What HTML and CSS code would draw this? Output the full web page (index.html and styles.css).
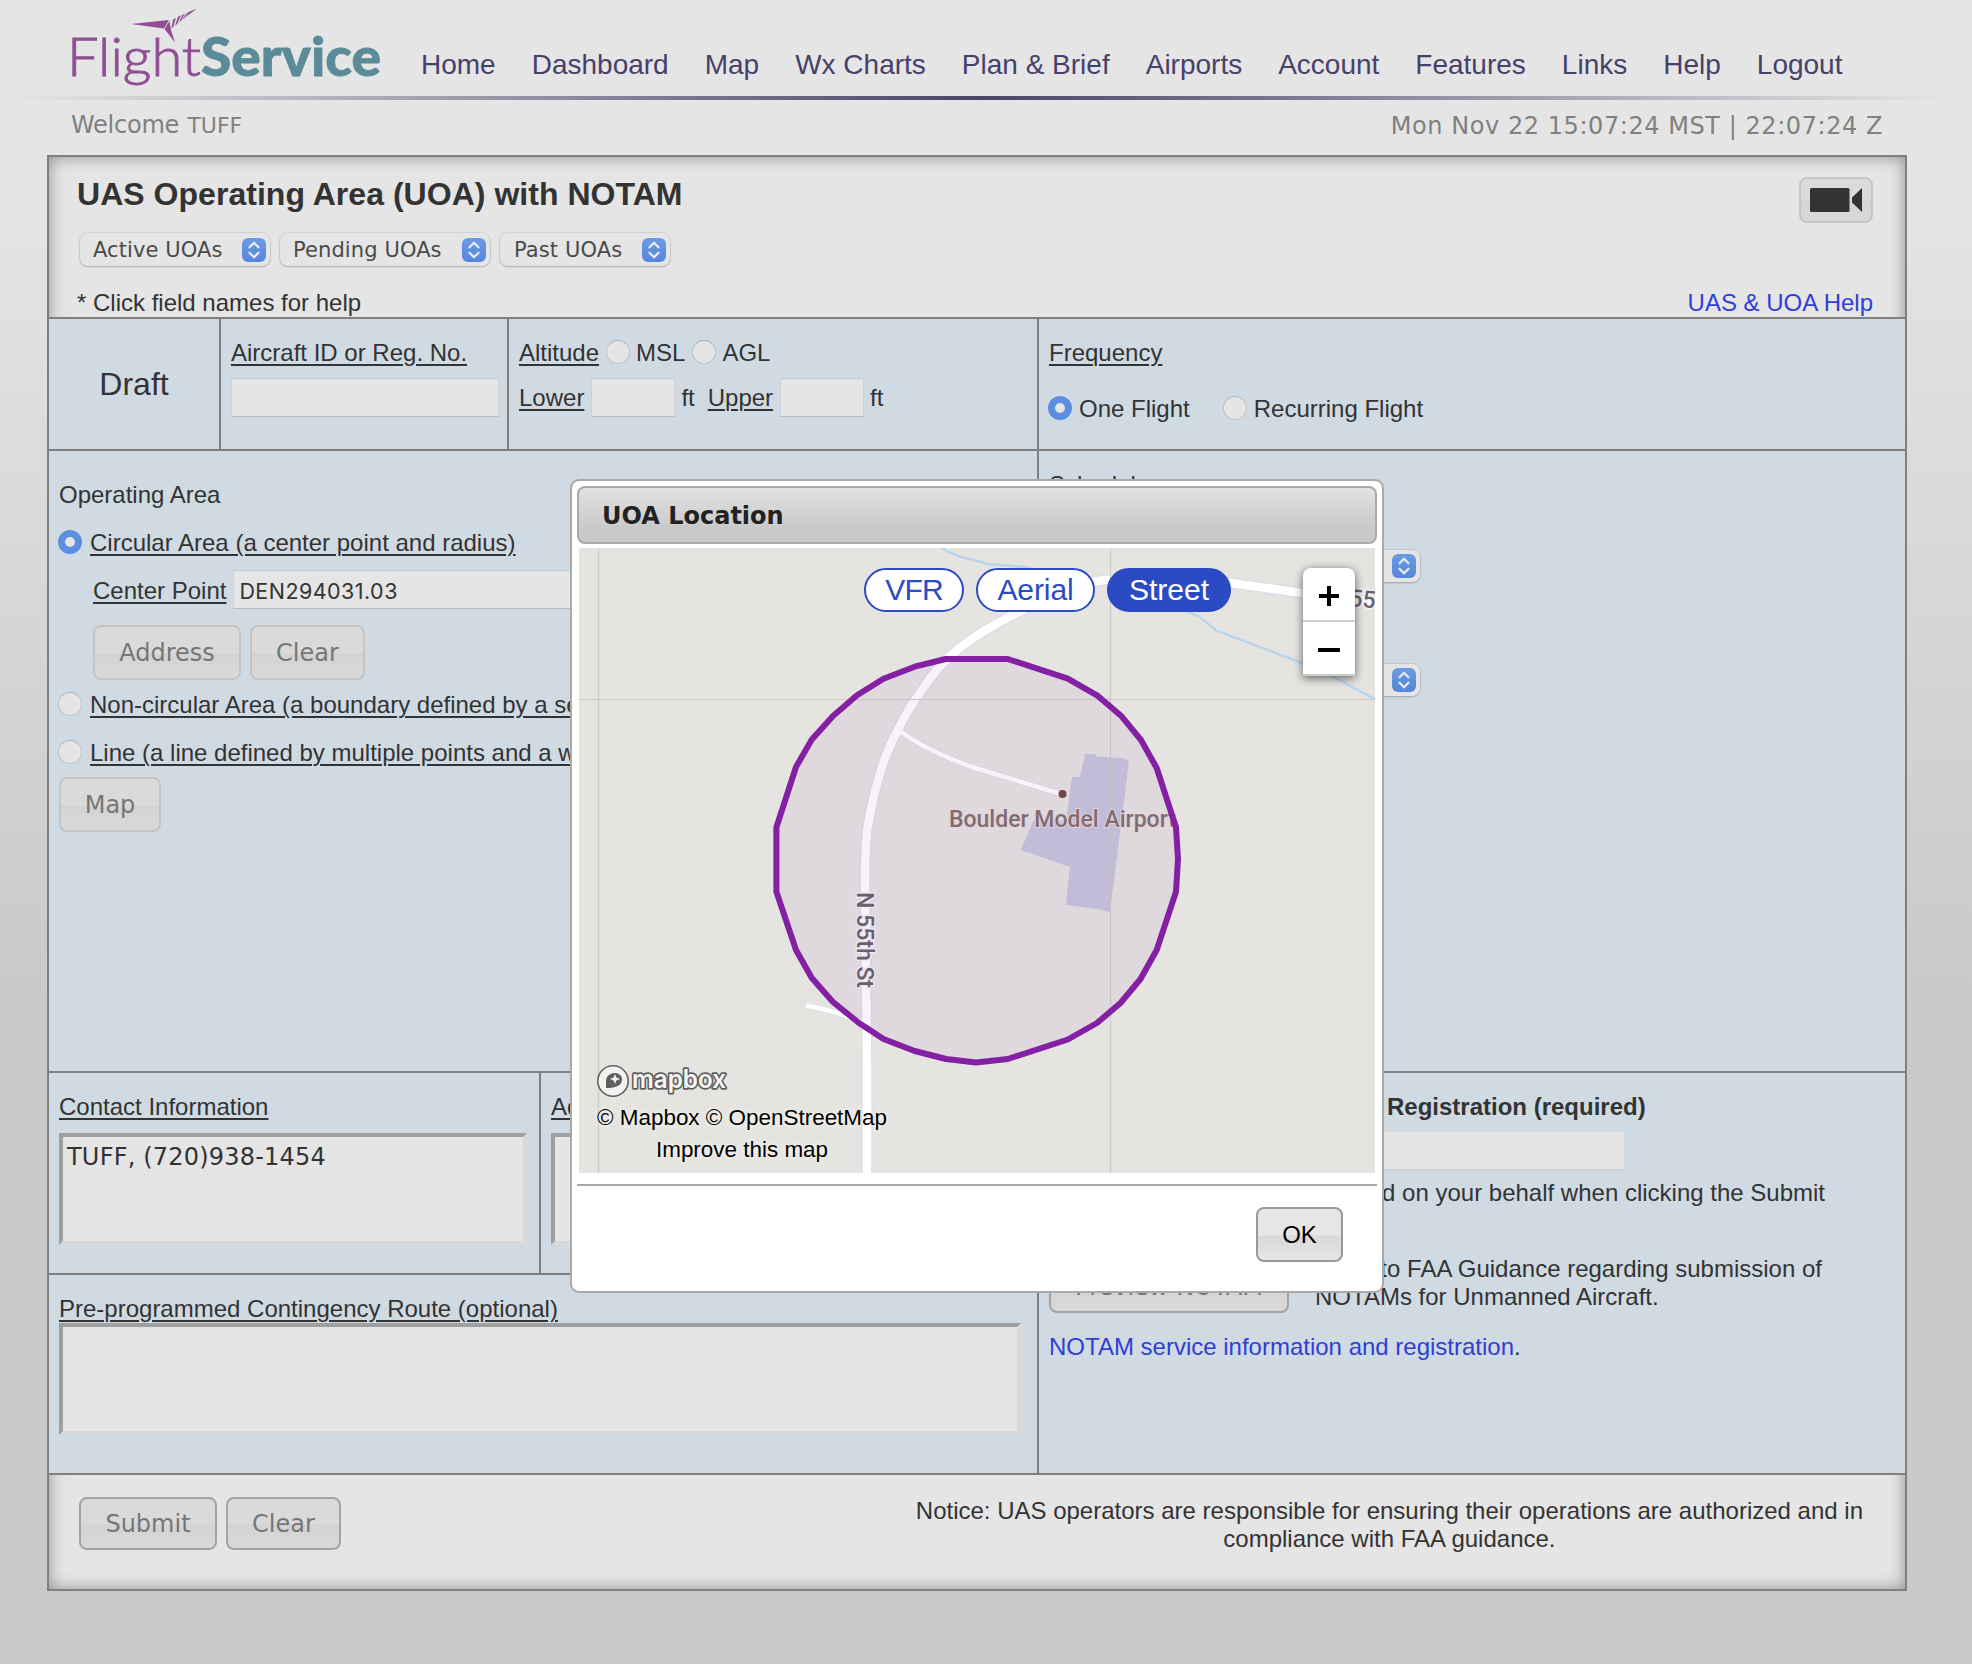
FILE: index.html
```html
<!DOCTYPE html>
<html lang="en">
<head>
<meta charset="utf-8">
<title>Flight Service - UAS Operating Area</title>
<link rel="stylesheet" href="styles.css">
</head>
<body>
<svg class="defs" width="0" height="0" aria-hidden="true">
  <symbol id="updown" viewBox="0 0 24 24">
    <path d="M7.500 9.200 12 4.800l4.500 4.400M7.500 14.800 12 19.200l4.500-4.400" fill="none" stroke="#e6ebf3" stroke-width="2.300" stroke-linecap="round" stroke-linejoin="round"/>
  </symbol>
</svg>

<header class="site-header">
  <svg class="logo" width="330" height="96" viewBox="60 0 330 96">
    <g fill="#904f94">
      <path d="M131 24 169 20 164 28.500z"/>
      <path d="M164.500 29 169.500 21 171 30 175 42.500z"/>
      <path d="M171.500 28.500 173 19.500 175.800 18 173.200 27.300z"/>
      <path d="M175 25.800 178 16.800 181 15.300 177.200 24z"/>
      <path d="M179.200 22.300 182.400 14.800 184.400 13.900 181.500 20.500z"/>
      <path d="M182.700 19.500 185.500 13.500 187 12.800 184.500 18.100z"/>
      <path d="M185.600 17.300 188 12.300 197 8.500z"/>
    </g>
    <text class="logo-flight" x="67" y="75.500" textLength="134" lengthAdjust="spacingAndGlyphs">Flight</text>
    <text class="logo-service" x="201" y="75.500" textLength="180" lengthAdjust="spacingAndGlyphs">Service</text>
  </svg>
  <nav class="nav">
    <a>Home</a><a>Dashboard</a><a>Map</a><a>Wx Charts</a><a>Plan &amp; Brief</a><a>Airports</a><a>Account</a><a>Features</a><a>Links</a><a>Help</a><a>Logout</a>
  </nav>
</header>
<div class="rule"></div>
<div class="status">
  <div class="welcome">Welcome <span>TUFF</span></div>
  <div class="clock">Mon Nov 22 15:07:24 MST | 22:07:24 Z</div>
</div>

<main class="panel">
  <section class="panel-head">
    <div class="head-left">
      <h1>UAS Operating Area (UOA) with NOTAM</h1>
      <div class="selects">
        <div class="select select-active">Active UOAs<i><svg><use href="#updown"/></svg></i></div>
        <div class="select select-pending">Pending UOAs<i><svg><use href="#updown"/></svg></i></div>
        <div class="select select-past">Past UOAs<i><svg><use href="#updown"/></svg></i></div>
      </div>
      <div>* Click field names for help</div>
    </div>
    <div class="head-right">
      <div class="video">
        <svg width="52" height="24" viewBox="0 0 52 24"><rect width="39.500" height="24" rx="1.500" fill="#333"/><path d="M52 0v24l-10-9.500v-5z" fill="#333"/></svg>
      </div>
      <a class="link">UAS &amp; UOA Help</a>
    </div>
  </section>

  <section class="form">
    <div class="cell draft">Draft</div>
    <div class="cell aircraft">
      <div><u>Aircraft ID or Reg. No.</u></div>
      <div class="input"></div>
    </div>
    <div class="cell altitude">
      <div class="row"><u>Altitude</u><b class="radio"></b><span class="msl">MSL</span><b class="radio"></b><span class="agl">AGL</span></div>
      <div class="row limits"><u>Lower</u><div class="input small"></div><span>ft</span><u class="upper">Upper</u><div class="input small"></div><span>ft</span></div>
    </div>
    <div class="cell frequency">
      <div><u>Frequency</u></div>
      <div class="row freq-options"><b class="radio on"></b><span>One Flight</span><b class="radio"></b><span>Recurring Flight</span></div>
    </div>

    <div class="cell area">
      <div>Operating Area</div>
      <div class="row option"><b class="radio on"></b><u>Circular Area (a center point and radius)</u></div>
      <div class="row center-point"><u>Center Point</u><div class="input">DEN294031.03</div></div>
      <div class="row area-buttons"><div class="btn">Address</div><div class="btn">Clear</div></div>
      <div class="row option noncircular"><b class="radio"></b><u>Non-circular Area (a boundary defined by a set</u></div>
      <div class="row option"><b class="radio"></b><u>Line (a line defined by multiple points and a w</u></div>
      <div class="row map-button"><div class="btn">Map</div></div>
    </div>
    <div class="cell schedule">
      <div>Schedule</div>
      <div class="select"><i><svg><use href="#updown"/></svg></i></div>
      <div class="select"><i><svg><use href="#updown"/></svg></i></div>
    </div>

    <div class="contact-row">
      <div class="cell contact"><div><u>Contact Information</u></div><div class="textarea">TUFF, (720)938-1454</div></div>
      <div class="cell contact additional"><div><u>Additional</u></div><div class="textarea"></div></div>
    </div>
    <div class="cell registration">
      <div class="reg-title">Registration (required)</div>
      <div class="input reg-input"></div>
      <div class="behalf">filed on your behalf when clicking the Submit</div>
      <div class="row preview-row">
        <div class="btn dark">Preview NOTAM</div>
        <p>Refer to FAA Guidance regarding submission of<br>NOTAMs for Unmanned Aircraft.</p>
      </div>
      <div><a class="link">NOTAM service information and registration</a>.</div>
    </div>
    <div class="cell route"><div><u>Pre-programmed Contingency Route (optional)</u></div><div class="textarea"></div></div>
  </section>

  <footer class="panel-foot">
    <div class="row"><div class="btn dark submit">Submit</div><div class="btn dark">Clear</div></div>
    <p>Notice: UAS operators are responsible for ensuring their operations are authorized and in<br>compliance with FAA guidance.</p>
  </footer>
</main>

<div class="dialog" role="dialog">
  <div class="dialog-title">UOA Location</div>
  <div class="map">
    <svg class="map-canvas" width="796" height="625" viewBox="579 548 796 625">
      <path d="M941 548Q955 556 967 558.500T988 564L1023 567 1100 581 1170 600 1187 612 1198.500 616 1217 631 1302 663 1334 677 1375 699.500" fill="none" stroke="#bad5ea" stroke-width="2.500"/>
      <path d="M1085 754h10l1 2.500 26 1.500 7 3-19 151-12-3-32-4 4-38-49-17 12-29h33l6-44h8z" fill="#c5c6da"/>
      <g fill="none" stroke-linejoin="round">
        <path d="M867 1173V1060L865 890Q865 835 869 820C875 785 886 751 897 732Q907 710 922 690C940 662 962 640 1021 611Q1060 585 1105 580 1165 576 1231 583L1302 593 1375 603" stroke="#dcdce7" stroke-width="11"/>
        <path d="M806 1005.500Q838 1011 866 1024M900 731Q925 750 972 767L1061 794" stroke="#dcdce7" stroke-width="6"/>
        <path d="M806 1005.500Q838 1011 866 1024M900 731Q925 750 972 767L1061 794" stroke="#fff" stroke-width="4.500"/>
        <path d="M867 1173V1060L865 890Q865 835 869 820C875 785 886 751 897 732Q907 710 922 690C940 662 962 640 1021 611Q1060 585 1105 580 1165 576 1231 583L1302 593 1375 603" stroke="#fff" stroke-width="8.500"/>
      </g>
      <path d="M598.500 548v625M1110.500 548v625M579 699.500h796" stroke="#cbcac7" stroke-width="1.200"/>
      <circle cx="1062.500" cy="794" r="4" fill="#6d4a40"/>
      <text class="place" x="949" y="826.500" textLength="227" lengthAdjust="spacingAndGlyphs">Boulder Model Airport</text>
      <text class="street" transform="translate(856.500 892) rotate(90)" textLength="96" lengthAdjust="spacingAndGlyphs">N 55th St</text>
      <text class="street" transform="translate(1349 606) rotate(5)" textLength="26" lengthAdjust="spacingAndGlyphs">55</text>
      <path d="M945.700 659H1007.800L1067.800 678.700 1097 695.300 1121 715.700 1141 740 1156.700 768 1176 827.300 1178 859 1176 891.700 1156.700 950 1140.500 979 1120.500 1003 1097 1023 1067.800 1039.500 1007.800 1059 976 1062.500 946 1059 914.600 1051 883.500 1039 859 1023 833 1002 811.800 978 796 950 776.400 891.700V827.300L796 767 811.800 739.500 833 716 857 695.300 883.500 678.700 914.600 666.700z" fill="#8420a4" fill-opacity=".06" stroke="#8420a4" stroke-width="6" stroke-linejoin="round"/>
      <circle cx="613" cy="1081" r="15.200" fill="#f2f2f0" stroke="#5f5f5d" stroke-width="1.600"/>
      <path d="M606 1088V1081C606 1071 622 1070 622 1079.500 622 1087 613 1088 606 1088z" fill="#5f5f5d"/>
      <path d="M615 1074l1.400 3.600 3.600 1.400-3.600 1.400-1.400 3.600-1.400-3.600-3.600-1.400 3.600-1.400z" fill="#f2f2f0"/>
      <text class="mapbox" x="632" y="1087.500" textLength="94" lengthAdjust="spacingAndGlyphs">mapbox</text>
    </svg>
    <div class="layers"><span class="vfr">VFR</span><span class="aerial">Aerial</span><span class="street-layer">Street</span></div>
    <div class="zoom">
      <span><svg width="22" height="22"><path d="M11 1v20M1 11h20" stroke="#000" stroke-width="4"/></svg></span>
      <span><svg width="22" height="22"><path d="M1 11h20" stroke="#000" stroke-width="4" stroke-linecap="round"/></svg></span>
    </div>
    <div class="attribution">© Mapbox © OpenStreetMap<br>Improve this map</div>
  </div>
  <div class="dialog-foot"><div class="ok">OK</div></div>
</div>
</body>
</html>
```
FILE: styles.css
```css
* { box-sizing: border-box; }
body {
  position: relative;
  margin: 0;
  width: 1972px;
  height: 1664px;
  overflow: hidden;
  background: linear-gradient(#e5e5e5 0, #e5e5e5 180px, #c9c9c9 1000px);
  color: #333;
  font: 24px/28px "Liberation Sans", Arial, sans-serif;
}
h1, p { margin: 0; }
i, b { font-style: normal; font-weight: normal; }
u { text-decoration-thickness: 2px; text-underline-offset: 3px; }
.defs { position: absolute; }
.row { display: flex; align-items: center; white-space: nowrap; }
.link { color: #2f3fd6; }

.site-header { display: flex; height: 96px; padding-left: 60px; }
.logo { flex: none; display: block; }
.logo-flight { font: 300 53px Lato, sans-serif; fill: #904f94; stroke: #904f94; stroke-width: .9px; }
.logo-service { font: 900 53px Lato, sans-serif; fill: #5b8b98; stroke: #5b8b98; stroke-width: .8px; }
.nav { display: flex; gap: 36px; padding: 49px 0 0 31px; font-size: 28px; line-height: 32px; color: #47416a; white-space: nowrap; }
.rule { height: 4px; margin: 0 26px 0 14px; background: linear-gradient(90deg, rgba(71,65,106,0), #4c4466 50%, rgba(71,65,106,0)); }
.status { display: flex; justify-content: space-between; height: 55px; padding: 11px 90px 0 71px; font-family: "DejaVu Sans", sans-serif; color: #808080; }
.welcome { letter-spacing: -.25px; }
.welcome span { font-size: 22px; letter-spacing: 0; margin-left: 1px; }
.clock { letter-spacing: .56px; padding-top: 1px; margin-right: -1px; }

.panel {
  width: 1860px;
  height: 1436px;
  margin-left: 47px;
  border: 2px solid #7f7f7f;
  background: #e5e5e5;
  box-shadow: inset 0 0 16px rgba(0,0,0,.38);
}
.panel-head { display: flex; justify-content: space-between; height: 160px; padding: 19px 32px 0 28px; }
h1 { font-size: 32px; line-height: 36px; letter-spacing: .03px; }
.selects { display: flex; gap: 10px; margin: 21px 0 23px 3px; }
.select {
  display: flex;
  align-items: center;
  justify-content: space-between;
  height: 33px;
  padding: 1px 4px 0 13px;
  border-radius: 8px;
  background: #e5e5e5;
  box-shadow: 0 0 1px 1px rgba(0,0,0,.08), 0 1px 2px rgba(0,0,0,.18);
  color: #4a4a4a;
  font: 21px/30px "DejaVu Sans", sans-serif;
  letter-spacing: .1px;
  white-space: nowrap;
}
.select i { width: 24px; height: 24px; margin-bottom: 1px; border-radius: 6px; background: linear-gradient(#6b9ce2, #5585dd); }
.select svg { display: block; width: 24px; height: 24px; }
.select-active { width: 190px; }
.select-pending { width: 210px; }
.select-past { width: 170px; padding-left: 14px; }
.head-right { display: flex; flex-direction: column; align-items: flex-end; justify-content: space-between; }
.video {
  display: flex;
  align-items: center;
  justify-content: center;
  width: 74px;
  height: 46px;
  margin-top: 1px;
  border: 2px solid #c6c6c6;
  border-radius: 8px;
  background: linear-gradient(#dadada 50%, #d4d4d4 52%, #d9d9d9);
}

.form { display: grid; grid-template-columns: 172px 288px 530px 866px; grid-template-rows: 132px 622px 202px 200px; }
.cell { border-top: 2px solid #7f7f7f; border-right: 2px solid #7f7f7f; background: #d0dae2; padding: 20px 0 0 10px; overflow: hidden; }
.frequency, .schedule, .registration { border-right: 0; }
.draft { display: flex; align-items: center; justify-content: center; padding: 0; font-size: 32px; }
.input { height: 39px; background: #e5e5e5; border: 1px solid; border-color: #bdcdd8 #d0d0d0 #b8bcc0; }
.aircraft .input { width: 268px; margin-top: 11px; }
.radio { flex: none; width: 24px; height: 24px; border-radius: 50%; background: #e5e5e5; border: 1px solid #bfc3c7; border-top-color: #aeb2b6; margin-top: -2px; }
.radio.on { border: 7px solid #5c8fe0; }
.altitude .radio { margin-left: 7px; }
.msl { margin-left: 6px; }
.agl { margin-left: 6px; }
.limits { margin-top: 11px; }
.limits .small { width: 84px; margin: 0 6px 0 7px; }
.limits .upper { margin-left: 13px; }
.limits span, .limits u { padding-top: 1px; }
.freq-options { margin-top: 28px; }
.freq-options .radio { margin-left: -1px; }
.freq-options span { margin: 0 34px 0 7px; }
.freq-options span:last-child { margin-left: 7px; }
.area { grid-column: 1 / 4; padding-top: 30px; }
.option { margin: 20px 0 0 -1px; }
.option u { margin-left: 8px; }
.center-point { margin: 13px 0 0 34px; }
.center-point u { padding-top: 2px; }
.center-point .input { width: 500px; margin-left: 7px; padding: 5px 0 0 5px; font: 21.5px/30px Inter, sans-serif; letter-spacing: .45px; }
.area-buttons { margin: 16px 0 0 34px; gap: 9px; }
.area-buttons .btn:first-child { width: 148px; }
.noncircular { margin-top: 11px; }
.map-button { margin-top: 10px; }
.map-button .btn { width: 102px; }
.btn {
  display: flex;
  align-items: center;
  justify-content: center;
  height: 55px;
  padding: 0 24px;
  border: 2px solid #c4c4c4;
  border-radius: 8px;
  background: linear-gradient(#dadada 50%, #d3d3d3 54%, #d9d9d9);
  color: #767676;
  font-family: "DejaVu Sans", sans-serif;
  white-space: nowrap;
}
.btn.dark { border-color: #a3a3a3; }
.schedule { padding-top: 20px; }
.schedule .select { width: 371px; height: 32px; margin-top: 51px; justify-content: flex-end; }
.schedule .select + .select { margin-top: 82px; }
.contact-row { grid-column: 1 / 4; display: grid; grid-template-columns: 492px 498px; }
.textarea {
  width: 468px;
  height: 112px;
  margin-top: 12px;
  padding: 6px 4px;
  border: 4px solid;
  border-color: #9f9f9f #d7d9da #d7d9da #9f9f9f;
  background: #e5e5e5;
  font-family: "DejaVu Sans", sans-serif;
}
.contact:first-child .textarea { letter-spacing: .2px; }
.registration { grid-column: 4; grid-row: 3 / 5; }
.reg-title { padding-left: 338px; font-weight: bold; }
.reg-input { width: 576px; margin-top: 10px; border-color: #d9dcdf #d9dcdf #c9cdd1; }
.behalf { width: 776px; margin-top: 9px; text-align: right; white-space: nowrap; }
.preview-row { align-items: flex-start; margin: 50px 0 20px; }
.preview-row p { margin: -2px 0 0 26px; }
.preview-row .btn { width: 240px; height: 56px; padding-top: 4px; }
.route { grid-column: 1 / 4; }
.route .textarea { width: 962px; margin-top: 0; }
.panel-foot { display: flex; justify-content: space-between; height: 116px; padding: 22px 42px 0 30px; border-top: 2px solid #7f7f7f; }
.panel-foot .row { align-items: flex-start; gap: 9px; }
.panel-foot .btn { height: 53px; }
.panel-foot .submit { width: 138px; }
.panel-foot p { text-align: center; }

.dialog {
  position: absolute;
  left: 570px;
  top: 479px;
  width: 814px;
  height: 814px;
  padding: 5px;
  border: 2px solid #aaa;
  border-radius: 9px;
  background: #fff;
}
.dialog-title {
  height: 58px;
  padding: 14px 23px;
  border: 2px solid #aaa;
  border-radius: 8px;
  background: linear-gradient(#e2e2e2, #c9c9c9 75%);
  color: #222;
  font: bold 24px/28px "DejaVu Sans", sans-serif;
}
.map { position: relative; width: 796px; height: 625px; margin: 4px 0 11px 2px; background: #e5e4e0; }
.map-canvas { display: block; }
.place { font: 500 23px Roboto, sans-serif; fill: #84706a; stroke: #e6e0e4; stroke-width: 2px; paint-order: stroke; }
.street { font: 500 24px Roboto, sans-serif; fill: #67646a; stroke: #f4f2f5; stroke-width: 3px; paint-order: stroke; }
.mapbox { font: 600 25px Inter, sans-serif; fill: #f6f6f4; stroke: #5f5f5d; stroke-width: 3.4px; stroke-linejoin: round; paint-order: stroke; }
.layers { position: absolute; top: 20px; left: 285px; display: flex; gap: 12px; font-size: 30px; line-height: 40px; text-align: center; }
.layers span { height: 44px; border: 2px solid #2a4bc4; border-radius: 22px; background: #fff; color: #2a4bc4; }
.layers .vfr { width: 100px; letter-spacing: -.8px; }
.layers .aerial { width: 119px; letter-spacing: -.1px; }
.layers .street-layer { width: 124px; background: #2a4bc4; color: #fff; }
.zoom { position: absolute; top: 20px; left: 724px; width: 52px; border-radius: 8px 8px 0 0; background: #fff; box-shadow: 0 2px 10px rgba(0,0,0,.6); }
.zoom span { display: flex; align-items: center; justify-content: center; height: 54px; border-bottom: 2px solid #ccc; padding: 4px 1px 0 0; }
.attribution { position: absolute; left: 18px; top: 554px; width: 290px; color: #000; font-size: 22.45px; line-height: 32px; text-align: center; white-space: nowrap; text-shadow: 0 0 5px #fff; }
.dialog-foot { display: flex; justify-content: flex-end; padding: 21px 34px 0 0; border-top: 2px solid #aaa; }
.ok { width: 87px; height: 55px; border: 2px solid #999; border-radius: 8px; background: linear-gradient(#e6e6e6 50%, #d9d9d9 54%, #e6e6e6); color: #000; line-height: 51px; text-align: center; }
```
